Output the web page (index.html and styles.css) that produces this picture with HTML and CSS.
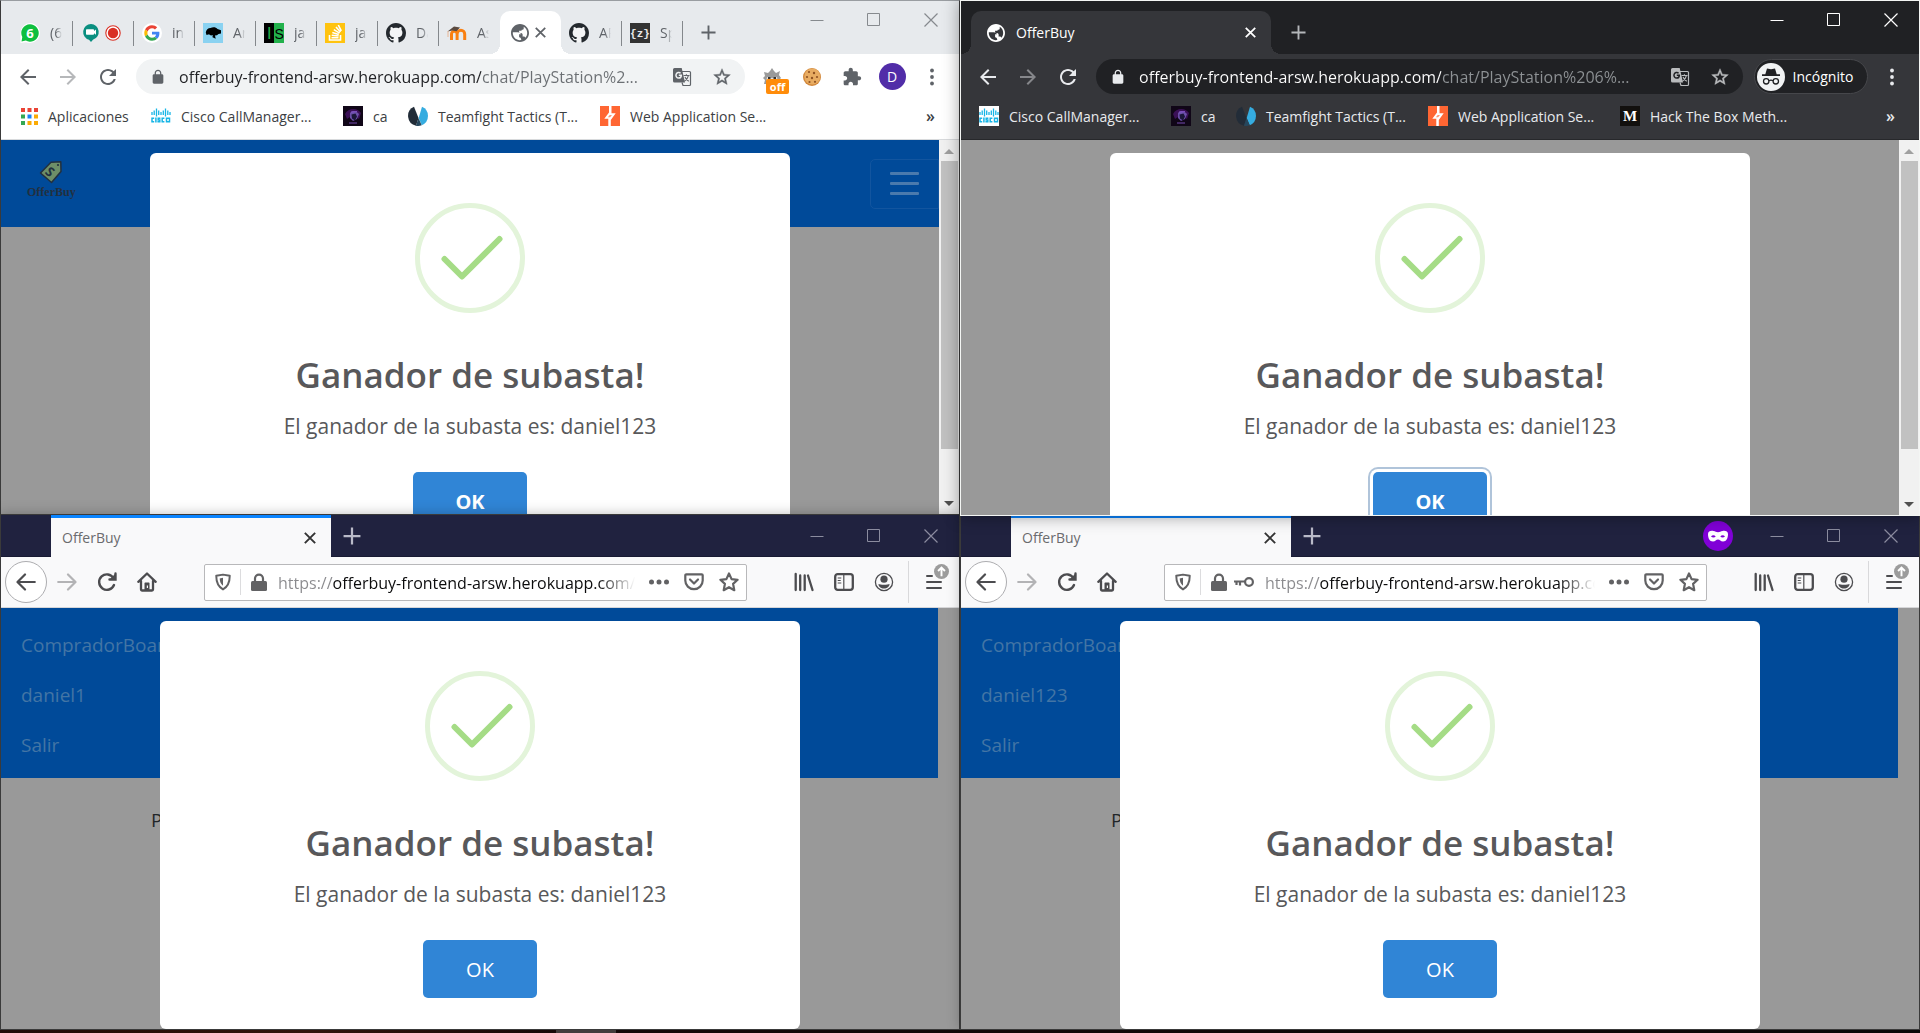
FILE: index.html
```html
<!DOCTYPE html>
<html lang="es">
<head>
<meta charset="utf-8">
<title>OfferBuy</title>
<link rel="stylesheet" href="styles.css">
</head>
<body>
<svg class="sprite" aria-hidden="true">
  <symbol id="i-back" viewBox="0 0 24 24"><path fill="currentColor" d="M20 11H7.83l5.59-5.59L12 4l-8 8 8 8 1.41-1.41L7.83 13H20v-2z"/></symbol>
  <symbol id="i-fwd" viewBox="0 0 24 24"><path fill="currentColor" d="M4 11h12.17l-5.59-5.59L12 4l8 8-8 8-1.41-1.41L16.17 13H4v-2z"/></symbol>
  <symbol id="i-reload" viewBox="0 0 24 24"><path fill="currentColor" d="M17.65 6.35C16.2 4.9 14.21 4 12 4c-4.42 0-7.99 3.58-7.99 8s3.57 8 7.99 8c3.73 0 6.84-2.55 7.73-6h-2.08c-.82 2.33-3.04 4-5.65 4-3.31 0-6-2.69-6-6s2.69-6 6-6c1.66 0 3.14.69 4.22 1.78L13 11h7V4l-2.35 2.35z"/></symbol>
  <symbol id="i-lock" viewBox="0 0 24 24"><path fill="currentColor" d="M18 8h-1V6c0-2.76-2.24-5-5-5S7 3.24 7 6v2H6c-1.1 0-2 .9-2 2v10c0 1.1.9 2 2 2h12c1.1 0 2-.9 2-2V10c0-1.1-.9-2-2-2zM15.1 8H8.9V6c0-1.71 1.39-3.1 3.1-3.1s3.1 1.39 3.1 3.1v2z"/></symbol>
  <symbol id="i-star" viewBox="0 0 24 24"><path fill="currentColor" stroke="currentColor" stroke-width=".5" d="M22 9.24l-7.19-.62L12 2 9.19 8.63 2 9.24l5.46 4.73L5.82 21 12 17.27 18.18 21l-1.63-7.03L22 9.24zM12 15.4l-3.76 2.27 1-4.28-3.32-2.88 4.38-.38L12 6.1l1.71 4.04 4.38.38-3.32 2.88 1 4.28L12 15.4z"/></symbol>
  <symbol id="i-translate" viewBox="0 0 20 20"><path fill="currentColor" d="M2.500 1h7.200l3.300 14.500H2.500A1.500 1.500 0 0 1 1 14V2.500A1.500 1.500 0 0 1 2.500 1z"/><path fill="none" stroke="currentColor" stroke-width="1.200" d="M10 4.500h7.500a1 1 0 0 1 1 1v12a1 1 0 0 1-1 1H11l-1-3"/><path fill="none" stroke="var(--box)" stroke-width="1.500" d="M6.800 8.200h2.500c0 2-1.200 2.900-2.600 2.900a2.800 2.800 0 1 1 1.900-4.900"/><path fill="none" stroke="currentColor" stroke-width="1.100" d="M11.500 8.500h6M14.400 7.200v1.300M16.400 8.600c-.5 2.500-2 4.500-4 5.600M13 10c.7 1.800 2 3.300 3.800 4.200"/></symbol>
  <symbol id="i-ext" viewBox="0 0 24 24"><path fill="currentColor" d="M20.500 11H19V7c0-1.100-.9-2-2-2h-4V3.500C13 2.120 11.880 1 10.500 1S8 2.120 8 3.500V5H4c-1.100 0-1.990.9-1.990 2v3.800H3.500c1.490 0 2.700 1.210 2.700 2.700s-1.210 2.700-2.700 2.700H2V20c0 1.100.9 2 2 2h3.800v-1.500c0-1.490 1.210-2.700 2.700-2.700s2.700 1.210 2.700 2.700V22H17c1.100 0 2-.9 2-2v-4h1.500c1.380 0 2.500-1.120 2.500-2.500S21.880 11 20.500 11z"/></symbol>
  <symbol id="i-dots" viewBox="0 0 20 20"><g fill="currentColor"><circle cx="10" cy="3.500" r="1.900"/><circle cx="10" cy="10" r="1.900"/><circle cx="10" cy="16.500" r="1.900"/></g></symbol>
  <symbol id="i-globe" viewBox="2 2 20 20"><path fill="currentColor" d="M12 2C6.480 2 2 6.480 2 12s4.480 10 10 10 10-4.480 10-10S17.520 2 12 2zm-1 17.930c-3.950-.49-7-3.850-7-7.930 0-.3 0-.6.100-.9h5.400c2 0 3.500 1.100 3.500 2.400h-2v3.300c1.500.3 2.400 1.200 2.400 3.050zm6.900-2.540c-.26-.81-1-1.390-1.900-1.390h-1.200c.5-2 .2-3.500-1.500-4.100H11V9.500h1.800c.8 0 1.200-.5 1.200-1.200h1c1.100 0 1.500-1.900 1-3.300 2.500 1.190 4 3.650 4 7 0 2.080-.8 3.970-2.100 5.390zM8.500 8.200h2V6.500h1.800V4C10 4 8.500 5 7 6z"/></symbol>
  <symbol id="i-x" viewBox="0 0 10 10"><path fill="none" stroke="currentColor" stroke-width="1.600" d="M.7.7l8.600 8.600M9.300.7L.7 9.300"/></symbol>
  <symbol id="i-plus" viewBox="0 0 16 16"><path fill="none" stroke="currentColor" stroke-width="2" d="M8 .5v15M.5 8h15"/></symbol>
  <symbol id="w-min" viewBox="0 0 14 14"><path stroke="currentColor" d="M.5 7.500h13"/></symbol>
  <symbol id="w-max" viewBox="0 0 14 14"><path fill="none" stroke="currentColor" d="M.5.5h12v12H.5z"/></symbol>
  <symbol id="w-close" viewBox="0 0 14 14"><path fill="none" stroke="currentColor" stroke-width="1.200" d="M.5.5l13 13M13.500.5l-13 13"/></symbol>
  <symbol id="f-wa" viewBox="0 0 20 20"><path fill="#fff" d="M10 0a10 10 0 1 1-4 19.200L.5 20V10A10 10 0 0 1 10 0z"/><path fill="#0fbf3f" d="M10 1.300a8.700 8.700 0 1 1-4.200 16.300L1.500 18.600l.8-4.500A8.700 8.700 0 0 1 10 1.300z"/><text x="10" y="14.800" text-anchor="middle" fill="#fff" font-family="Open Sans, sans-serif" font-weight="700" font-size="13">6</text></symbol>
  <symbol id="f-meet" viewBox="0 0 20 20"><path fill="#0a8f80" d="M10 1a8 8 0 0 1 2.200 15.600L10 19l-2-2.300A8 8 0 0 1 10 1z"/><path fill="#fff" d="M6 6.200h6c.6 0 1 .4 1 1V8l2-1.500v5.200l-2-1.500v.6c0 .6-.4 1-1 1H6c-.6 0-1-.4-1-1V7.200c0-.6.4-1 1-1z"/></symbol>
  <symbol id="f-rec" viewBox="0 0 16 16"><circle cx="8" cy="8" r="7.200" fill="#fff" stroke="#d93025" stroke-width="1.100"/><circle cx="8" cy="8" r="5.200" fill="#d93025"/></symbol>
  <symbol id="f-google" viewBox="-7 -7 62 62"><circle cx="24" cy="24" r="31" fill="#fff"/><path fill="#EA4335" d="M24 9.500c3.540 0 6.710 1.220 9.210 3.600l6.850-6.850C35.900 2.380 30.470 0 24 0 14.620 0 6.510 5.380 2.560 13.220l7.980 6.190C12.430 13.720 17.740 9.500 24 9.500z"/><path fill="#4285F4" d="M46.980 24.550c0-1.570-.15-3.090-.38-4.550H24v9.020h12.940c-.58 2.960-2.260 5.480-4.780 7.180l7.730 6c4.510-4.180 7.090-10.360 7.090-17.650z"/><path fill="#FBBC05" d="M10.530 28.590c-.48-1.450-.76-2.990-.76-4.590s.27-3.140.76-4.590l-7.980-6.190C.92 16.460 0 20.120 0 24c0 3.880.92 7.540 2.560 10.780l7.970-6.190z"/><path fill="#34A853" d="M24 48c6.480 0 11.930-2.130 15.890-5.810l-7.730-6c-2.150 1.450-4.920 2.300-8.160 2.300-6.260 0-11.570-4.220-13.470-9.910l-7.980 6.190C6.510 42.620 14.620 48 24 48z"/></symbol>
  <symbol id="f-bird" viewBox="0 0 20 20"><path fill="#8ad2f1" d="M0 0h20v20H0z"/><path d="M2.800 9.500c.3-2.500 2.200-4.500 4.700-4.500 2.500-1.200 5.500-.9 7 1l3.500 1.300v3.200l-2.500.5-1.500 1.200-2 .3.700 3.200-3.200-1.500.2-2.200c-1.500.8-3 .3-3.500-.7l-2.700.6z"/></symbol>
  <symbol id="f-is" viewBox="0 0 20 20"><path d="M0 0h10v20H0z"/><path fill="#22b14c" d="M10 0h10v20H10z"/><text x="3" y="16" fill="#22b14c" font-family="Liberation Sans, sans-serif" font-size="16">I</text><text x="10.500" y="16" font-family="Liberation Sans, sans-serif" font-size="14">S</text></symbol>
  <symbol id="f-so" viewBox="0 0 20 20"><path fill="#ffc30f" d="M0 0h20v20H0z"/><path fill="none" stroke="#fff" stroke-width="1.600" d="M4.500 12v5h11v-5M6.500 14.800h7M6.700 12.300l6.900.7M7.300 9.500l6.500 1.900M8.800 6.600l5.800 3.500M11 4l4.500 5M13.300 2l3 5.800"/></symbol>
  <symbol id="f-gh" viewBox="0 0 16 16"><circle cx="8" cy="8" r="7.500" fill="#f4f5f6"/><path fill="#24292e" d="M8 0C3.580 0 0 3.580 0 8c0 3.540 2.290 6.530 5.470 7.590.4.070.55-.17.55-.38 0-.19-.010-.82-.010-1.490-2.010.37-2.530-.49-2.690-.94-.09-.23-.48-.94-.82-1.130-.28-.15-.68-.52-.010-.53.63-.010 1.080.58 1.230.82.72 1.210 1.870.87 2.330.66.070-.52.28-.87.51-1.070-1.780-.2-3.640-.89-3.640-3.950 0-.87.310-1.590.82-2.150-.08-.2-.36-1.020.08-2.120 0 0 .67-.21 2.200.82.640-.18 1.320-.27 2-.27s1.360.09 2 .27c1.530-1.040 2.200-.82 2.200-.82.44 1.100.16 1.920.08 2.120.51.56.82 1.270.82 2.150 0 3.070-1.870 3.750-3.650 3.950.29.250.54.730.54 1.480 0 1.070-.010 1.930-.010 2.200 0 .21.150.46.550.38A8.010 8.010 0 0 0 16 8c0-4.420-3.580-8-8-8z"/></symbol>
  <symbol id="f-moodle" viewBox="0 0 20 20"><path fill="none" stroke="#f98012" stroke-width="3" d="M4.500 17v-6a2.800 2.800 0 0 1 5.600 0v6m0-6a3.800 3.800 0 0 1 7.600 0v6"/><path fill="#5a4a40" d="M.5 8.500L7 3.500l6 1-3.500 3.800-4-.8z"/><path stroke="#e8a070" stroke-width=".7" d="M1 8v6"/></symbol>
  <symbol id="f-z" viewBox="0 0 20 20"><path fill="#333" d="M0 0h20v20H0z"/><text x="10" y="13.500" text-anchor="middle" fill="#e8e8e8" font-family="Liberation Mono, monospace" font-weight="700" font-size="11">{z}</text></symbol>
  <symbol id="b-apps" viewBox="0 0 17 17"><path fill="#ea4335" d="M0 0h4v4H0zM6.500 0h4v4h-4zM13 0h4v4h-4z"/><path fill="#34a853" d="M0 6.500h4v4H0zM0 13h4v4H0z"/><path fill="#1a82f7" d="M6.500 6.500h4v4h-4z"/><path fill="#fbab05" d="M13 6.500h4v4h-4zM6.500 13h4v4h-4zM13 13h4v4h-4z"/></symbol>
  <symbol id="b-cisco" viewBox="0 0 20 20"><path fill="#fff" d="M0 0h20v20H0z"/><path fill="none" stroke="#17b5e6" stroke-width="1.300" d="M1 6v3M3.200 4.500V9M5.500 2.500v8M7.700 4.500V9M10 6v3M12.300 4.500V9M14.500 2.500v8M16.800 4.500V9M19 6v3"/><path fill="none" stroke="#17b5e6" stroke-width="1.500" d="M3.200 12.200H1v3.600h2.200M4.900 11.500v5M9.400 12.200H7.200V14h1.600v1.800H6.400M13.400 12.200h-2.200v3.600h2.200M15.500 12.200h3v3.600h-3z"/></symbol>
  <symbol id="b-ca" viewBox="0 0 20 20"><path fill="#100617" d="M0 0h20v20H0z"/><path fill="#3b1057" d="M2 8c3-6 12-7 16-1l-2 6-6-4-6 4z"/><path fill="#6b4fa8" d="M7 7c2-3 7-2 9 1l-2 5-4 2-3-3z"/><path fill="#1b1738" d="M8.500 8.500l4-1 1.500 3-2 4-3-2z"/><path stroke="#8f5dd8" d="M8 6l6-.5M6 17h8" stroke-width=".8"/></symbol>
  <symbol id="b-tft" viewBox="0 0 20 20"><path fill="#222c38" d="M6 .8L10.500 12 8 19.700A10 10 0 0 1 6 .8z"/><path fill="#35ace0" d="M14 .8A10 10 0 0 1 13.800 19.200L10.700 12z"/><path fill="#26465c" d="M10.500 12l3.200 7.300a10 10 0 0 1-5.800.4z"/></symbol>
  <symbol id="b-burp" viewBox="0 0 20 20"><path fill="#ff6633" d="M0 0h20v20H0z"/><path fill="#fff" d="M9 0h2.500v7.300h4.200L10.800 14v6H8.300v-7.300H4.300L9 6.500z"/><path fill="#ff6633" d="M9.700 9h2.300l-1.900 2.300H7.900z" opacity=".7"/></symbol>
  <symbol id="b-medium" viewBox="0 0 20 20"><path fill="#12100e" d="M0 0h20v20H0z"/><text x="10" y="15" text-anchor="middle" fill="#fff" font-family="Liberation Serif, serif" font-weight="700" font-size="15">M</text></symbol>
  <symbol id="e-wolf" viewBox="0 0 20 20"><path fill="#9a9a9a" d="M2 17l1-4-2-2 2-2-1-4 4 1 2-2 2-3 2 3 2 2 4-2-1 4 2 3-2 2 1 4z"/><path fill="#e4e4e4" d="M4 16l1-6 5 1 5-1 1 6z"/><path fill="#333" d="M6 10h2.500v2H6zM11.500 10H14v2h-2.500z"/></symbol>
  <symbol id="e-cookie" viewBox="0 0 20 20"><circle cx="10" cy="10" r="9" fill="#d2873a"/><circle cx="10.300" cy="9.500" r="8" fill="#e8ac62"/><g fill="#8f5222"><circle cx="7" cy="5" r="1.100"/><circle cx="12" cy="6" r="1.200"/><circle cx="5" cy="10" r="1.100"/><circle cx="10" cy="11" r="1.200"/><circle cx="15" cy="10" r="1.100"/><circle cx="7.500" cy="15" r="1.100"/><circle cx="13" cy="14.800" r="1.100"/></g></symbol>
  <symbol id="e-incog" viewBox="0 0 28 28"><circle cx="14" cy="14" r="14" fill="#f1f3f4"/><path fill="#202124" d="M10 5.500l4 .8 4-.8 1.700 5.700H8.300zM5 11.200h18v1.800H5z"/><g fill="none" stroke="#202124" stroke-width="1.300"><circle cx="9.200" cy="18.300" r="2.700"/><circle cx="18.800" cy="18.300" r="2.700"/><path d="M12 17.800c1.300-.8 2.700-.8 4 0"/></g></symbol>
  <symbol id="x-back" viewBox="0 0 20 20"><path fill="none" stroke="currentColor" stroke-width="2.200" stroke-linecap="round" stroke-linejoin="round" d="M18.800 10H1.600M9 2.500L1.500 10 9 17.500"/></symbol>
  <symbol id="x-fwd" viewBox="0 0 20 20"><path fill="none" stroke="currentColor" stroke-width="2.200" stroke-linecap="round" stroke-linejoin="round" d="M1.200 10h17.200M11 2.500l7.500 7.500-7.500 7.500"/></symbol>
  <symbol id="x-reload" viewBox="0 0 20 20"><path fill="none" stroke="currentColor" stroke-width="2.400" stroke-linecap="round" d="M17 13a7.700 7.700 0 1 1-.5-6.800M18.500 1.500v6h-6"/><path fill="currentColor" d="M18.500 1.500v6h-6z"/></symbol>
  <symbol id="x-home" viewBox="0 0 20 20"><path fill="none" stroke="currentColor" stroke-width="2.300" stroke-linecap="round" stroke-linejoin="round" d="M1.300 9.800L10 1.500l8.700 8.300M4 9v8.500c0 .6.500 1 1 1h10c.6 0 1-.4 1-1V9"/><path fill="currentColor" d="M7.500 18v-6.500c0-.6.400-1 1-1h3c.6 0 1 .4 1 1V18z"/><path fill="#f9f9fa" d="M9.800 13.500h1.200V16H9.800z"/></symbol>
  <symbol id="x-shield" viewBox="0 0 20 20"><path fill="none" stroke="currentColor" stroke-width="2.200" stroke-linejoin="round" d="M10 1.800l7.500 1.200c0 7-1.800 12-7.500 15.200-5.700-3.200-7.500-8.200-7.500-15.200z"/><path fill="currentColor" d="M10 5.200v9C7.500 12 6.500 9.500 6.300 6z"/></symbol>
  <symbol id="x-lock" viewBox="0 0 16 18"><path fill="none" stroke="currentColor" stroke-width="2.200" d="M4 8.500V5.600a4 4 0 0 1 8 0v2.900"/><rect y="8" width="16" height="10" rx="1.500" fill="currentColor"/></symbol>
  <symbol id="x-key" viewBox="0 0 20 12"><g fill="none" stroke="currentColor" stroke-width="2.200"><circle cx="15" cy="6" r="3.900"/><path d="M11 5.500H0M2.500 5.500v3.500M6 5.500v4"/></g></symbol>
  <symbol id="x-more" viewBox="0 0 20 6"><g fill="currentColor"><circle cx="2.500" cy="3" r="2.500"/><circle cx="10" cy="3" r="2.500"/><circle cx="17.500" cy="3" r="2.500"/></g></symbol>
  <symbol id="x-pocket" viewBox="0 0 20 18"><path fill="none" stroke="currentColor" stroke-width="2.200" stroke-linecap="round" stroke-linejoin="round" d="M2.300 1.300h15.400c.6 0 1 .4 1 1v5.200a8.700 8.700 0 0 1-17.400 0V2.300c0-.6.400-1 1-1zM6 6.500l4 4 4-4"/></symbol>
  <symbol id="x-star" viewBox="0 0 20 20"><path fill="none" stroke="currentColor" stroke-width="2.200" stroke-linejoin="round" d="M10 1.500l2.600 5.600 6 .7-4.500 4.100 1.200 6.300-5.300-3-5.300 3 1.200-6.300L1.400 7.800l6-.7z"/></symbol>
  <symbol id="x-lib" viewBox="0 0 20 20"><path fill="none" stroke="currentColor" stroke-width="2.300" stroke-linecap="round" d="M1.700 2v16M6.200 3.500V18M10.700 3.500V18M14 3.500L18.500 18"/></symbol>
  <symbol id="x-side" viewBox="0 0 20 18"><rect x="1.200" y="1.200" width="17.600" height="15.600" rx="2.500" fill="none" stroke="currentColor" stroke-width="2.300"/><path fill="none" stroke="currentColor" stroke-width="1.200" d="M9.800 2v14M3.700 5h3.600M3.700 7.500h3M3.700 10h3.600"/></symbol>
  <symbol id="x-user" viewBox="0 0 20 20"><circle cx="10" cy="10" r="8.600" fill="none" stroke="currentColor" stroke-width="1.300"/><circle cx="10" cy="7.200" r="3.600" fill="currentColor"/><path fill="currentColor" d="M4.500 12c1.500 1 9.500 1 11 0 .2 2.500-2.500 4.500-5.500 4.500S4.300 14.500 4.500 12z"/></symbol>
  <symbol id="x-menu" viewBox="0 0 16 16"><path stroke="currentColor" stroke-width="2" stroke-linecap="round" d="M1 2h5M1 8h14M1 14h14"/></symbol>
  <symbol id="x-up" viewBox="0 0 14 14"><circle cx="7" cy="7" r="7" fill="#9c9c9c"/><path fill="none" stroke="#fff" stroke-width="1.800" d="M7 11.500V3.500M3.800 6.500L7 3.300l3.200 3.200"/></symbol>
  <symbol id="x-mask" viewBox="0 0 30 30"><circle cx="15" cy="15" r="15" fill="#8000d7"/><path fill="#fff" fill-rule="evenodd" d="M5 13c0-3 3-3.500 5.500-3 2 .4 2.500 1.200 4.500 1.200s2.500-.8 4.500-1.200c2.500-.5 5.500 0 5.500 3 0 4-1.500 7.500-5 7.500-2.500 0-3-2-5-2s-2.500 2-5 2c-3.500 0-5-3.500-5-7.500zm3 2.500c1.500 1.200 3.500 1.200 4.700 0-1.200-1.600-3.400-1.600-4.700 0zm9.300 0c1.200 1.200 3.200 1.200 4.700 0-1.300-1.600-3.500-1.600-4.700 0z"/></symbol>
  <symbol id="check" viewBox="0 0 110 110"><circle cx="55" cy="55" r="52.500" fill="none" stroke="#e3f4da" stroke-width="5"/><path fill="none" stroke="#a5dc86" stroke-width="6" stroke-linecap="round" stroke-linejoin="round" d="M29.500 56L47 73.500 84.500 36"/></symbol>
  <symbol id="logo" viewBox="0 0 24 24"><path fill="#6d8f68" stroke="#22303f" stroke-width="1.500" stroke-linejoin="round" d="M1.500 13L12 2.200l9.800-.4.200 9.700L12.500 22.500z"/><text x="7.500" y="17" fill="#22303f" font-family="Open Sans, sans-serif" font-weight="700" font-size="13" transform="rotate(40 12 12)">S</text><circle cx="19" cy="5" r="1.100" fill="#22303f"/></symbol>
</svg>

<main class="desktop">
  <section class="window chrome" aria-label="Chrome">
    <header class="tabstrip">
      <div class="tabs">
        <div class="tab"><svg class="fav"><use href="#f-wa"/></svg><span>(6</span></div>
        <div class="tab"><svg class="fav"><use href="#f-meet"/></svg><svg class="rec"><use href="#f-rec"/></svg></div>
        <div class="tab"><svg class="fav"><use href="#f-google"/></svg><span>in</span></div>
        <div class="tab"><svg class="fav"><use href="#f-bird"/></svg><span>Ar</span></div>
        <div class="tab"><svg class="fav"><use href="#f-is"/></svg><span>jav</span></div>
        <div class="tab"><svg class="fav"><use href="#f-so"/></svg><span>jav</span></div>
        <div class="tab"><svg class="fav"><use href="#f-gh"/></svg><span>Da</span></div>
        <div class="tab last"><svg class="fav"><use href="#f-moodle"/></svg><span>As</span></div>
        <div class="tab active"><svg class="globe"><use href="#i-globe"/></svg><button class="tabx" aria-label="Cerrar"><svg><use href="#i-x"/></svg></button></div>
        <div class="tab"><svg class="fav"><use href="#f-gh"/></svg><span>AR</span></div>
        <div class="tab"><svg class="fav"><use href="#f-z"/></svg><span>Sp</span></div>
        <button class="newtab" aria-label="Nueva pestaña"><svg><use href="#i-plus"/></svg></button>
      </div>
      <div class="winctl"><button aria-label="Minimizar"><svg><use href="#w-min"/></svg></button><button aria-label="Maximizar"><svg><use href="#w-max"/></svg></button><button aria-label="Cerrar ventana"><svg><use href="#w-close"/></svg></button></div>
    </header>
    <nav class="toolbar">
      <button class="tool" aria-label="Atrás"><svg><use href="#i-back"/></svg></button>
      <button class="tool dim" aria-label="Adelante"><svg><use href="#i-fwd"/></svg></button>
      <button class="tool" aria-label="Recargar"><svg><use href="#i-reload"/></svg></button>
      <div class="omnibox">
        <svg class="s16"><use href="#i-lock"/></svg>
        <input class="url" aria-label="Dirección" value="offerbuy-frontend-arsw.herokuapp.com/chat/PlayStation%2...">
        <button class="tool" aria-label="Traducir"><svg class="s20"><use href="#i-translate"/></svg></button>
        <button class="tool" aria-label="Favorito"><svg class="s20"><use href="#i-star"/></svg></button>
      </div>
      <div class="actions">
        <button class="tool" aria-label="Extensión desactivada"><svg class="s20 wolf"><use href="#e-wolf"/></svg><b class="off">off</b></button>
        <button class="tool" aria-label="Cookies"><svg class="s20"><use href="#e-cookie"/></svg></button>
        <button class="tool" aria-label="Extensiones"><svg class="s20"><use href="#i-ext"/></svg></button>
        <button class="tool" aria-label="Perfil"><span class="avatar">D</span></button>
        <button class="tool" aria-label="Menú"><svg class="s20"><use href="#i-dots"/></svg></button>
      </div>
    </nav>
    <nav class="bookmarks">
      <a href="#" class="apps"><svg class="s17"><use href="#b-apps"/></svg>Aplicaciones</a>
      <a href="#"><svg><use href="#b-cisco"/></svg>Cisco CallManager...</a>
      <a href="#" class="short"><svg><use href="#b-ca"/></svg>ca</a>
      <a href="#"><svg><use href="#b-tft"/></svg>Teamfight Tactics (T...</a>
      <a href="#"><svg><use href="#b-burp"/></svg>Web Application Se...</a>
      <button class="more">»</button>
    </nav>
    <div class="view">
      <div class="page">
        <div class="brandbar">
          <a href="#" class="brand"><svg><use href="#logo"/></svg>OfferBuy</a>
          <button class="burger" aria-label="Menú de navegación"><i></i><i></i><i></i></button>
        </div>
        <div class="overlay">
          <div class="dialog" role="dialog">
            <svg class="check"><use href="#check"/></svg>
            <h2>Ganador de subasta!</h2>
            <p>El ganador de la subasta es: daniel123</p>
            <button class="ok bold">OK</button>
          </div>
        </div>
      </div>
      <div class="scroll"><i class="up"></i><i class="thumb"></i><i class="down"></i></div>
    </div>
  </section>

  <section class="window chrome dark" aria-label="Chrome incógnito">
    <header class="tabstrip">
      <div class="tabs">
        <div class="tab active wide"><svg class="globe"><use href="#i-globe"/></svg><span>OfferBuy</span><button class="tabx" aria-label="Cerrar"><svg><use href="#i-x"/></svg></button></div>
        <button class="newtab" aria-label="Nueva pestaña"><svg><use href="#i-plus"/></svg></button>
      </div>
      <div class="winctl"><button aria-label="Minimizar"><svg><use href="#w-min"/></svg></button><button aria-label="Maximizar"><svg><use href="#w-max"/></svg></button><button aria-label="Cerrar ventana"><svg><use href="#w-close"/></svg></button></div>
    </header>
    <nav class="toolbar">
      <button class="tool" aria-label="Atrás"><svg><use href="#i-back"/></svg></button>
      <button class="tool dim" aria-label="Adelante"><svg><use href="#i-fwd"/></svg></button>
      <button class="tool" aria-label="Recargar"><svg><use href="#i-reload"/></svg></button>
      <div class="omnibox">
        <svg class="s16"><use href="#i-lock"/></svg>
        <input class="url" aria-label="Dirección" value="offerbuy-frontend-arsw.herokuapp.com/chat/PlayStation%206%...">
        <button class="tool" aria-label="Traducir"><svg class="s20"><use href="#i-translate"/></svg></button>
        <button class="tool" aria-label="Favorito"><svg class="s20"><use href="#i-star"/></svg></button>
      </div>
      <div class="actions">
        <button class="incog"><svg><use href="#e-incog"/></svg>Incógnito</button>
        <button class="tool" aria-label="Menú"><svg class="s20"><use href="#i-dots"/></svg></button>
      </div>
    </nav>
    <nav class="bookmarks">
      <a href="#"><svg><use href="#b-cisco"/></svg>Cisco CallManager...</a>
      <a href="#" class="short"><svg><use href="#b-ca"/></svg>ca</a>
      <a href="#"><svg><use href="#b-tft"/></svg>Teamfight Tactics (T...</a>
      <a href="#"><svg><use href="#b-burp"/></svg>Web Application Se...</a>
      <a href="#"><svg><use href="#b-medium"/></svg>Hack The Box Meth...</a>
      <button class="more">»</button>
    </nav>
    <div class="view">
      <div class="page">
        <div class="overlay">
          <div class="dialog" role="dialog">
            <svg class="check"><use href="#check"/></svg>
            <h2>Ganador de subasta!</h2>
            <p>El ganador de la subasta es: daniel123</p>
            <button class="ok bold focused">OK</button>
          </div>
        </div>
      </div>
      <div class="scroll"><i class="up"></i><i class="thumb"></i><i class="down"></i></div>
    </div>
  </section>

  <section class="window firefox" aria-label="Firefox">
    <header class="tabstrip">
      <div class="fxtab"><span>OfferBuy</span><button class="tabx" aria-label="Cerrar"><svg><use href="#i-x"/></svg></button></div>
      <button class="newtab" aria-label="Nueva pestaña"><svg><use href="#i-plus"/></svg></button>
      <div class="winctl"><button aria-label="Minimizar"><svg><use href="#w-min"/></svg></button><button aria-label="Maximizar"><svg><use href="#w-max"/></svg></button><button aria-label="Cerrar ventana"><svg><use href="#w-close"/></svg></button></div>
    </header>
    <nav class="toolbar">
      <button class="tool round" aria-label="Atrás"><svg><use href="#x-back"/></svg></button>
      <button class="tool dim" aria-label="Adelante"><svg><use href="#x-fwd"/></svg></button>
      <button class="tool" aria-label="Recargar"><svg><use href="#x-reload"/></svg></button>
      <button class="tool" aria-label="Inicio"><svg><use href="#x-home"/></svg></button>
      <div class="urlbar">
        <button class="shield" aria-label="Protección"><svg><use href="#x-shield"/></svg></button>
        <div class="ident"><svg class="lock"><use href="#x-lock"/></svg></div>
        <input class="url" aria-label="Dirección" value="https://offerbuy-frontend-arsw.herokuapp.com/chat">
        <button class="act" aria-label="Acciones"><svg class="h6"><use href="#x-more"/></svg></button>
        <button class="act" aria-label="Pocket"><svg class="h18"><use href="#x-pocket"/></svg></button>
        <button class="act" aria-label="Favorito"><svg><use href="#x-star"/></svg></button>
      </div>
      <button class="tool" aria-label="Biblioteca"><svg><use href="#x-lib"/></svg></button>
      <button class="tool" aria-label="Barra lateral"><svg class="h18"><use href="#x-side"/></svg></button>
      <button class="tool" aria-label="Cuenta"><svg><use href="#x-user"/></svg></button>
      <button class="tool menu" aria-label="Menú"><svg class="s16"><use href="#x-menu"/></svg><svg class="badge"><use href="#x-up"/></svg></button>
    </nav>
    <div class="view">
      <div class="page">
        <div class="links"><a href="#">CompradorBoard</a><a href="#">daniel1</a><a href="#">Salir</a></div>
        <p class="behind">P</p>
        <div class="overlay">
          <div class="dialog" role="dialog">
            <svg class="check"><use href="#check"/></svg>
            <h2>Ganador de subasta!</h2>
            <p>El ganador de la subasta es: daniel123</p>
            <button class="ok">OK</button>
          </div>
        </div>
      </div>
    </div>
  </section>

  <section class="window firefox" aria-label="Firefox privado">
    <header class="tabstrip">
      <div class="fxtab"><span>OfferBuy</span><button class="tabx" aria-label="Cerrar"><svg><use href="#i-x"/></svg></button></div>
      <button class="newtab" aria-label="Nueva pestaña"><svg><use href="#i-plus"/></svg></button>
      <svg class="mask"><use href="#x-mask"/></svg>
      <div class="winctl"><button aria-label="Minimizar"><svg><use href="#w-min"/></svg></button><button aria-label="Maximizar"><svg><use href="#w-max"/></svg></button><button aria-label="Cerrar ventana"><svg><use href="#w-close"/></svg></button></div>
    </header>
    <nav class="toolbar">
      <button class="tool round" aria-label="Atrás"><svg><use href="#x-back"/></svg></button>
      <button class="tool dim" aria-label="Adelante"><svg><use href="#x-fwd"/></svg></button>
      <button class="tool" aria-label="Recargar"><svg><use href="#x-reload"/></svg></button>
      <button class="tool" aria-label="Inicio"><svg><use href="#x-home"/></svg></button>
      <div class="urlbar">
        <button class="shield" aria-label="Protección"><svg><use href="#x-shield"/></svg></button>
        <div class="ident"><svg class="lock"><use href="#x-lock"/></svg><svg class="key"><use href="#x-key"/></svg></div>
        <input class="url" aria-label="Dirección" value="https://offerbuy-frontend-arsw.herokuapp.com/chat">
        <button class="act" aria-label="Acciones"><svg class="h6"><use href="#x-more"/></svg></button>
        <button class="act" aria-label="Pocket"><svg class="h18"><use href="#x-pocket"/></svg></button>
        <button class="act" aria-label="Favorito"><svg><use href="#x-star"/></svg></button>
      </div>
      <button class="tool" aria-label="Biblioteca"><svg><use href="#x-lib"/></svg></button>
      <button class="tool" aria-label="Barra lateral"><svg class="h18"><use href="#x-side"/></svg></button>
      <button class="tool" aria-label="Cuenta"><svg><use href="#x-user"/></svg></button>
      <button class="tool menu" aria-label="Menú"><svg class="s16"><use href="#x-menu"/></svg><svg class="badge"><use href="#x-up"/></svg></button>
    </nav>
    <div class="view">
      <div class="page">
        <div class="links"><a href="#">CompradorBoard</a><a href="#">daniel123</a><a href="#">Salir</a></div>
        <p class="behind">P</p>
        <div class="overlay">
          <div class="dialog" role="dialog">
            <svg class="check"><use href="#check"/></svg>
            <h2>Ganador de subasta!</h2>
            <p>El ganador de la subasta es: daniel123</p>
            <button class="ok">OK</button>
          </div>
        </div>
      </div>
    </div>
  </section>

  <footer class="taskbar"></footer>
</main>
</body>
</html>
```
FILE: styles.css
```css
* { box-sizing: border-box; }
body { margin: 0; font-family: "Open Sans", "Noto Sans", sans-serif; font-size: 14px; color: #3c4043; }
button { font: inherit; color: inherit; background: none; border: 0; padding: 0; margin: 0; display: flex; align-items: center; justify-content: center; }
input { font: inherit; border: 0; padding: 0; background: none; min-width: 0; outline: 0; }
a { color: inherit; text-decoration: none; }
h2, p { margin: 0; font-weight: 400; }
svg { display: block; flex: none; }
.sprite { display: none; }

.desktop { display: grid; grid-template-columns: repeat(2, minmax(0, 1fr)); grid-template-rows: minmax(0, 514fr) minmax(0, 515fr) 4px; height: 100vh; background: #333; overflow: hidden; }
.window { display: flex; flex-direction: column; min-width: 0; border: 1px solid #3a3a3a; overflow: hidden; }
.tabstrip { display: flex; flex: none; }
.winctl { display: flex; margin-left: auto; }
.winctl button { width: 57px; height: 100%; }
.winctl svg { width: 14px; height: 14px; }
.tool { width: 40px; height: 35px; flex: none; }
.tool svg { width: 24px; height: 24px; }
.tool .s20 { width: 20px; height: 20px; }
.s16, .tool .s16 { width: 16px; height: 16px; }
.dim { opacity: .45; }
.view { display: flex; flex: 1; min-height: 0; background: #999; }
.page { position: relative; flex: 1; min-width: 0; overflow: hidden; background: #999; }

/* Chrome */
.chrome { --box: #f1f3f4; border-width: 1px 1px 0 1px; border-top-color: #999da1; background: #fff; }
.chrome .tabstrip { height: 53px; background: #e7eaed; color: #5f6368; }
.chrome .winctl { height: 37px; color: #868a8e; }
.tabs { display: flex; align-items: flex-end; padding-left: 11px; }
.tab { position: relative; display: flex; align-items: center; width: 61px; height: 43px; padding-left: 8px; gap: 10px; }
.tab::after { content: ""; position: absolute; right: 0; top: 10px; width: 1px; height: 25px; background: #84888c; }
.tab.last::after { display: none; }
.tab span { width: 12px; overflow: hidden; white-space: nowrap; mask-image: linear-gradient(90deg, #000 50%, transparent); }
.fav { width: 20px; height: 20px; }
.rec { width: 16px; height: 16px; margin-left: -6px; }
.globe { width: 18px; height: 18px; }
.tabx svg { width: 11px; height: 11px; }
.tab.active { background: #fff; border-radius: 10px 10px 0 0; padding-left: 11px; gap: 6px; }
.tab.active::before, .tab.active::after { content: ""; position: absolute; top: auto; right: auto; bottom: 0; width: 10px; height: 10px; background: none; }
.tab.active::before { left: -10px; background: radial-gradient(circle at 0 0, transparent 10px, #fff 10px); }
.tab.active::after { left: 100%; background: radial-gradient(circle at 100% 0, transparent 10px, #fff 10px); }
.newtab { width: 50px; height: 43px; }
.newtab svg { width: 15px; height: 15px; }
.chrome .toolbar { display: flex; align-items: center; height: 45px; padding: 0 7px; color: #5f6368; }
.omnibox { display: flex; align-items: center; flex: 1; min-width: 0; height: 35px; margin-left: 8px; padding: 0 3px 0 14px; border-radius: 18px; background: var(--box); }
.url { flex: 1; font-size: 16px; color: #202124; -webkit-text-fill-color: transparent; background-clip: text; -webkit-background-clip: text; }
.omnibox .url { margin-left: 13px; background-image: linear-gradient(90deg, #202124 302px, #6b6f73 302px); }
.actions { display: flex; margin-left: 7px; }
.actions .tool { position: relative; }
.off { position: absolute; left: 14px; top: 20px; width: 23px; height: 15px; border-radius: 2px; background: #ff8c0a; color: #fff; font-size: 11px; line-height: 15px; text-align: center; }
.avatar { width: 27px; height: 27px; border-radius: 50%; background: #512da8; color: #fff; line-height: 27px; text-align: center; }
.bookmarks { display: flex; align-items: center; height: 41px; padding: 0 24px 6px 20px; border-bottom: 1px solid #d8dadc; }
.bookmarks a { display: flex; align-items: center; gap: 10px; width: 192px; flex: none; white-space: nowrap; }
.bookmarks svg { width: 20px; height: 20px; }
.bookmarks .apps { width: 130px; }
.bookmarks .apps svg { width: 17px; height: 17px; }
.bookmarks .short { width: 65px; }
.more { margin-left: auto; font-size: 16px; font-weight: 600; }
.scroll { display: flex; flex-direction: column; align-items: center; flex: none; width: 20px; padding: 9px 0 8px; background: #f1f1f1; }
.up, .down { border: 5px solid transparent; border-top-width: 0; border-bottom-color: #a0a0a0; }
.down { border-width: 5px 5px 0; border-top-color: #505050; margin-top: auto; }
.thumb { width: 17px; height: 288px; margin-top: 7px; background: #c1c1c1; }

.brandbar { display: flex; justify-content: space-between; align-items: flex-start; height: 87px; background: #004a99; }
.brand { display: flex; flex-direction: column; align-items: center; padding: 20px 0 0 26px; color: #22303f; font: 700 12px/16px "Liberation Serif", serif; }
.brand svg { width: 24px; height: 24px; }
.burger { flex-direction: column; gap: 7px; width: 69px; height: 50px; margin-top: 19px; padding-bottom: 2px; border: 1px solid #12559f; border-radius: 5px 0 0 5px; }
.burger i { width: 29px; height: 3px; border-radius: 1px; background: #4a7aad; }

.dark { --box: #202124; position: relative; z-index: 2; margin-bottom: -2px; border: 1px solid #f4f6f4; background: #35363a; color: #e8eaed; box-shadow: 0 0 16px rgba(0, 0, 0, .4); }
.dark .tabstrip { background: #202124; color: #fff; }
.dark .winctl { color: #fff; }
.dark .tabs { padding-left: 10px; }
.dark .tab.active { width: 300px; background: #35363a; padding: 0 15px 0 16px; gap: 11px; }
.dark .tab.active::before { background: radial-gradient(circle at 0 0, transparent 10px, #35363a 10px); }
.dark .tab.active::after { background: radial-gradient(circle at 100% 0, transparent 10px, #35363a 10px); }
.dark .tab span { width: auto; flex: 1; mask-image: none; }
.dark .newtab { width: 54px; color: #b4b7ba; }
.dark .toolbar { color: #e8eaed; }
.dark .omnibox .tool { color: #b9bbbd; }
.dark .omnibox .url { background-image: linear-gradient(90deg, #fff 302px, #8e9295 302px); }
.dark .actions { margin-left: 11px; gap: 4px; }
.incog { gap: 8px; width: 114px; height: 35px; padding: 0 12px 0 0; border: 1px solid #46474b; border-radius: 18px; background: #202124; color: #fff; }
.incog svg { width: 28px; height: 28px; }
.dark .bookmarks { padding-left: 18px; border-color: #27282b; }

/* Firefox */
.firefox { position: relative; z-index: 1; background: #f9f9fa; border-bottom: 0; box-shadow: 0 0 12px rgba(0, 0, 0, .25); }
.firefox .tabstrip { height: 42px; padding-left: 50px; background: #20223f; border-bottom: 1px solid #181a33; align-items: center; }
.fxtab { display: flex; align-items: center; justify-content: space-between; align-self: stretch; width: 280px; margin-bottom: -1px; padding: 0 15px 0 11px; border-top: 3px solid #0a84ff; background: #f9f9fa; color: #6b6b6e; }
.fxtab .tabx { color: #333; }
.fxtab .tabx svg { width: 12px; height: 12px; }
.firefox .newtab { width: 42px; color: #b9bac8; }
.firefox .newtab svg { width: 18px; height: 18px; }
.firefox .winctl { height: 100%; color: #8b8c9f; }
.mask { width: 30px; height: 30px; margin-left: auto; }
.mask + .winctl { margin-left: 15px; }
.firefox .toolbar { display: flex; align-items: center; flex: none; height: 51px; padding-left: 4px; border-bottom: 1px solid #d6d6d8; color: #4c4c4f; }
.firefox .tool svg, .act svg { width: 20px; height: 20px; }
.firefox .tool .h18, .act .h18 { height: 18px; }
.act .h6 { height: 6px; }
.firefox .round { width: 42px; height: 42px; border: 1px solid #adadb0; border-radius: 50%; background: #fff; }
.firefox .dim { opacity: .4; }
.urlbar { display: flex; align-items: center; flex: 1; min-width: 0; height: 37px; margin: 0 37px; border: 1px solid #b8b8ba; border-radius: 2px; background: #fff; color: #626264; }
.shield { width: 36px; height: 26px; border-right: 1px solid #dcdcde; }
.shield svg { width: 18px; height: 18px; }
.ident { display: flex; align-items: center; gap: 7px; padding: 0 11px 0 10px; }
.lock { width: 16px; height: 18px; }
.key { width: 20px; height: 12px; }
.urlbar .url { width: 0; padding-top: 2px; background-image: linear-gradient(90deg, #8a8a8d 55px, #0c0c0d 55px, #0c0c0d calc(100% - 42px), transparent calc(100% - 6px)); }
.act { width: 35px; height: 35px; }
.firefox .menu { position: relative; width: 51px; height: 42px; margin-left: 4px; border-left: 1px solid #d9d9db; }
.firefox .menu .s16 { width: 16px; height: 16px; }
.firefox .menu .badge { position: absolute; right: 10px; top: 3px; width: 15px; height: 15px; }
.links { display: flex; flex-direction: column; margin-right: 21px; padding: 12px 20px 8px; background: #004a99; color: #4375a5; font-size: 19px; line-height: 50px; }
.behind { padding: 30px 0 0 150px; color: #212529; font-size: 19px; line-height: 24px; }

/* Alert dialog laid over the page */
.overlay { position: absolute; inset: 0; display: flex; justify-content: center; align-items: flex-start; padding-top: 13px; }
.dialog { display: flex; flex-direction: column; align-items: center; width: 640px; padding: 50px 0 31px; border-radius: 6px; background: #fff; color: #58585a; }
.check { width: 110px; height: 110px; }
.dialog h2 { margin-top: 38px; font-size: 35px; font-weight: 600; line-height: 48px; }
.dialog p { margin-top: 10px; font-size: 21px; line-height: 34px; }
.ok { width: 114px; height: 58px; margin-top: 29px; border-radius: 5px; background: #3085d6; color: #fff; font-size: 20px; }
.bold { font-weight: 700; }
.focused { box-shadow: 0 0 0 3px #fff, 0 0 0 5px #b0c4da; }

.taskbar { position: relative; z-index: 3; grid-column: 1 / -1; border-top: 1px solid #3a3a3a; background: linear-gradient(90deg, transparent 556px, #443c3c 556px, #443c3c 616px, transparent 616px), linear-gradient(90deg, #200a06, #32140a 16%, #150708 30%, #0b0708); }
```
